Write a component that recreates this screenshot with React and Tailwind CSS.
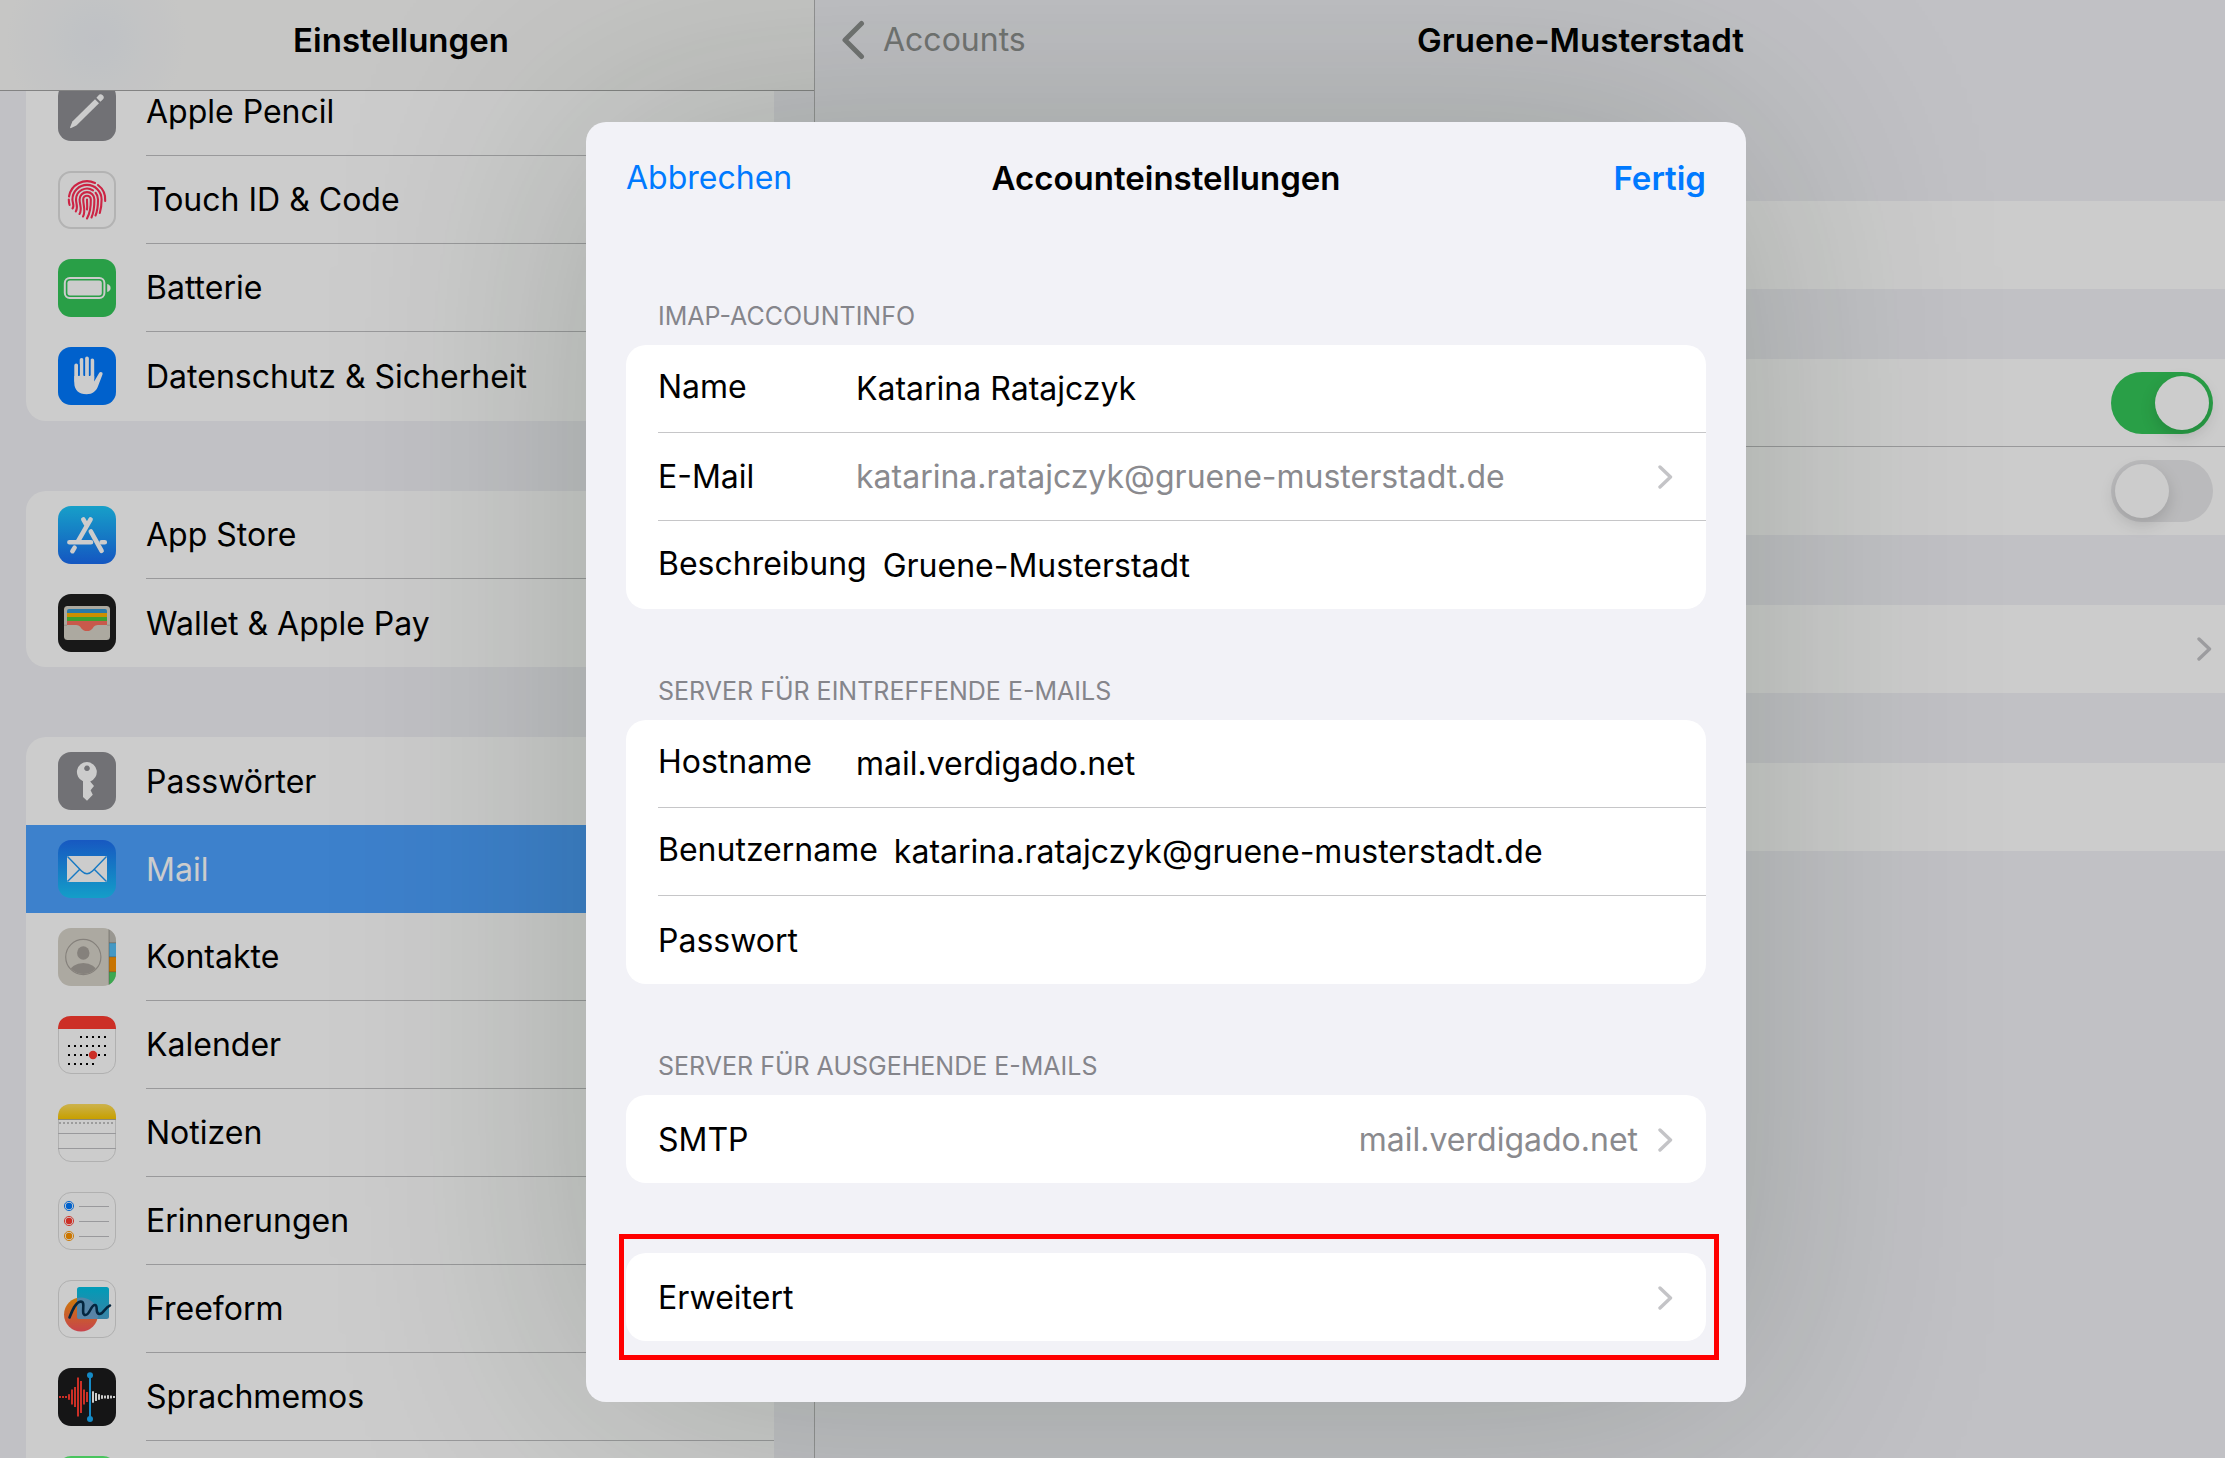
import clsx from "clsx";

function PencilIcon() {
  return (
    <svg viewBox="0 0 58 58" className="size-full">
      <rect width="58" height="58" rx="13" fill="#8e8e93" />
      <path d="M37 16.2 41 20.2 18.4 42.6 12.6 45.2 12 44.6 14.4 38.6Z" fill="#fff" />
      <path d="M38.4 14.8 40.4 12.4a3 3 0 0 1 4.4 4.2L42.4 18.8Z" fill="#fff" />
    </svg>
  );
}

function TouchIdIcon() {
  return (
    <svg viewBox="0 0 58 58" className="size-full">
      <rect x="1" y="1" width="56" height="56" rx="12" fill="#fff" stroke="#e0e0e0" strokeWidth="2" />
      <g fill="none" stroke="#ff2d55" strokeWidth="2.1" strokeLinecap="round">
        <path d="M11 25.5A18.3 18.3 0 0 1 37 12M40 14A18.3 18.3 0 0 1 47.2 30M10.8 28.5Q10.8 31.5 11.6 34" />
        <path d="M14.5 37.5C16.8 34.5 14.4 32 14.4 28.5A14.6 14.6 0 0 1 43.6 28.5C43.6 34 43 38 41.8 42" />
        <path d="M17.8 40.5C20.5 36.5 18 33 18 28.5A11 11 0 0 1 35 19.4M37.6 21.8Q40 24.5 40 28.5C40 35 39.5 40 37.5 44.5" />
        <path d="M21.5 43C24.5 38 21.6 34 21.6 28.5A7.4 7.4 0 0 1 36.4 28.5C36.4 36 36 41 33.5 46.5" />
        <path d="M25 45.5C28 40.5 25.2 34 25.2 28.5A3.8 3.8 0 0 1 32.8 28.5C33 37 32 42 29 47.5" />
        <path d="M29 28.5C29 33 29.5 36 29 38.5" />
      </g>
    </svg>
  );
}

function BatteryIcon() {
  return (
    <svg viewBox="0 0 58 58" className="size-full">
      <rect width="58" height="58" rx="13" fill="#34c759" />
      <rect x="6.8" y="19" width="39.6" height="20" rx="5" fill="none" stroke="#fff" strokeWidth="2" />
      <rect x="9.4" y="21.6" width="34.4" height="14.8" rx="2.6" fill="#fff" />
      <path d="M49.2 25c2 .6 3.4 2 3.4 4s-1.4 3.4-3.4 4Z" fill="#fff" />
    </svg>
  );
}

function HandIcon() {
  return (
    <svg viewBox="0 0 58 58" className="size-full">
      <rect width="58" height="58" rx="13" fill="#007aff" />
      <g stroke="#fff" strokeWidth="3.8" strokeLinecap="round">
        <path d="M18.2 18.4V34M23.6 12.8V32M29 11.4V32M34.3 13.4V32" />
      </g>
      <path
        d="M16.3 29H36.2V34.6L41 26.2C42 24.2 45.2 25 44.5 27.4L40.2 38.8C38.2 44.4 34.6 47.2 28.6 47.2 20.6 47.2 16.3 42.8 16.3 36Z"
        fill="#fff"
      />
      <path d="M20.9 17V28M26.3 12V28M31.7 12.5V28" stroke="#007aff" strokeWidth="1.5" />
    </svg>
  );
}

function AppStoreIcon() {
  return (
    <svg viewBox="0 0 58 58" className="size-full">
      <linearGradient id="store" x2="0" y2="1">
        <stop stopColor="#1dc8fb" />
        <stop offset="1" stopColor="#1a6cf2" />
      </linearGradient>
      <rect width="58" height="58" rx="13" fill="url(#store)" />
      <g stroke="#fff" strokeWidth="4.6" strokeLinecap="round" fill="none">
        <path d="M25.3 13.4 28.4 18.8M32.6 13.4 19.8 35.6M16.6 41.6 14.4 45.2M11.4 36.3H33M43.6 36.3H46.8" />
        <path d="M32.8 25.4 43.6 44.8" />
      </g>
    </svg>
  );
}

function WalletIcon() {
  return (
    <svg viewBox="0 0 58 58" className="size-full">
      <rect width="58" height="58" rx="13" fill="#1f1f1f" />
      <rect x="6" y="12" width="46" height="34" rx="3.5" fill="#d8d4c8" />
      <path d="M9 19V17q0-2 2-2H47q2 0 2 2V19Z" fill="#3699d2" />
      <rect x="9" y="19" width="40" height="4.2" fill="#ffb300" />
      <rect x="9" y="23" width="40" height="4.2" fill="#4ec83c" />
      <path d="M9 27H49V31H41C37 31 36.4 32 34.6 34.4 32 37.8 26 37.8 23.4 34.4 21.6 32 21 31 17 31H9Z" fill="#fa705e" />
      <path d="M6 31.2H9M49 31.2H52" stroke="#b5b1a6" />
    </svg>
  );
}

function KeyIcon() {
  return (
    <svg viewBox="0 0 58 58" className="size-full">
      <rect width="58" height="58" rx="13" fill="#8e8e93" />
      <path
        fillRule="evenodd"
        d="M29 10a10 10 0 0 1 3.2 19.4L36 34 32.6 38.2 34.8 42.8 29 48.8 25 45V29.2A10 10 0 0 1 29 10Zm0 3.5a2.8 2.8 0 1 0 .01 0Z"
        fill="#fff"
      />
    </svg>
  );
}

function MailIcon() {
  return (
    <svg viewBox="0 0 58 58" className="size-full">
      <linearGradient id="mail" x2="0" y2="1">
        <stop stopColor="#1d6ff2" />
        <stop offset="1" stopColor="#19c6fb" />
      </linearGradient>
      <rect width="58" height="58" rx="13" fill="url(#mail)" />
      <rect x="9" y="16" width="40" height="26" rx="1" fill="#fff" />
      <path
        d="M9.5 16.5 23.5 31C27 34.6 31 34.6 34.5 31L48.5 16.5M9.5 41.5 21.8 29.2M48.5 41.5 36.2 29.2"
        fill="none"
        stroke="#1c98f6"
        strokeWidth="1.4"
      />
    </svg>
  );
}

function ContactsIcon() {
  return (
    <svg viewBox="0 0 58 58" className="size-full">
      <clipPath id="contacts">
        <rect width="58" height="58" rx="13" />
      </clipPath>
      <clipPath id="avatar">
        <circle cx="25.3" cy="29" r="17" />
      </clipPath>
      <g clipPath="url(#contacts)">
        <rect width="58" height="58" fill="#d8d4ca" />
        <rect x="51" width="7" height="15" fill="#c0bdb6" />
        <rect x="51" y="15" width="7" height="14" fill="#55bff5" />
        <rect x="51" y="29" width="7" height="15" fill="#fa9100" />
        <rect x="51" y="44" width="7" height="14" fill="#4bd264" />
        <path d="M51 14.8H58M51 28.8H58M51 43.8H58M51 0V58" stroke="#6b6b60" strokeOpacity=".5" />
        <g fill="#a7a29b">
          <ellipse cx="25.3" cy="25" rx="6.2" ry="6.8" />
          <ellipse cx="25.3" cy="44" rx="13.5" ry="9" clipPath="url(#avatar)" />
        </g>
        <circle cx="25.3" cy="29" r="17.6" fill="none" stroke="#a7a29b" strokeWidth="1.2" />
      </g>
    </svg>
  );
}

const dotColumns = [11, 17, 23, 29, 35, 41, 47];

function CalendarIcon() {
  return (
    <svg viewBox="0 0 58 58" className="size-full">
      <rect x=".5" y=".5" width="57" height="57" rx="12.5" fill="#fff" stroke="#dcdcdc" />
      <path d="M0 13C0 5 5 0 13 0H45C53 0 58 5 58 13Z" fill="#ff3b30" />
      {dotColumns.map((x, i) => (
        <g key={x}>
          {i > 1 && <rect x={x - 1} y="20" width="2" height="2" />}
          <rect x={x - 1} y="29" width="2" height="2" />
          <rect x={x - 1} y="38" width="2" height="2" />
          {i < 5 && <rect x={x - 1} y="47" width="2" height="2" />}
        </g>
      ))}
      <circle cx="35" cy="39" r="4.2" fill="#ff3b30" />
    </svg>
  );
}

function NotesIcon() {
  return (
    <svg viewBox="0 0 58 58" className="size-full">
      <linearGradient id="notes" x2="0" y2="1">
        <stop stopColor="#ffdf60" />
        <stop offset="1" stopColor="#fac800" />
      </linearGradient>
      <rect x=".5" y=".5" width="57" height="57" rx="12.5" fill="#fff" stroke="#dcdcdc" />
      <path d="M0 15V13C0 5 5 0 13 0H45C53 0 58 5 58 13V15Z" fill="url(#notes)" />
      <path d="M0 15.5H58" stroke="#b0a98f" />
      <path d="M1 19H57" stroke="#c4c4c4" strokeWidth="2" strokeDasharray="2 2" />
      <path d="M0 29.5H58M0 44.5H58" stroke="#c0c0c4" />
    </svg>
  );
}

function RemindersIcon() {
  const rows = [
    { y: 14, color: "#007aff" },
    { y: 29, color: "#ff3b30" },
    { y: 44, color: "#ff9500" },
  ];
  return (
    <svg viewBox="0 0 58 58" className="size-full">
      <rect x=".5" y=".5" width="57" height="57" rx="12.5" fill="#fff" stroke="#dcdcdc" />
      {rows.map(({ y, color }) => (
        <g key={y}>
          <circle cx="11" cy={y} r="4.6" fill="none" stroke={color} strokeWidth=".9" />
          <circle cx="11" cy={y} r="3.2" fill={color} />
          <path d={`M21 ${y + 0.5}H51`} stroke="#c0c0c4" />
        </g>
      ))}
    </svg>
  );
}

function FreeformIcon() {
  return (
    <svg viewBox="0 0 58 58" className="size-full">
      <linearGradient id="ball" x2="0" y2="1">
        <stop stopColor="#ff9a0a" />
        <stop offset="1" stopColor="#fa5560" />
      </linearGradient>
      <linearGradient id="note" x2="0" y2="1">
        <stop stopColor="#00c3e6" />
        <stop offset="1" stopColor="#4aa3cf" />
      </linearGradient>
      <rect x=".5" y=".5" width="57" height="57" rx="12.5" fill="#fff" stroke="#dcdcdc" />
      <circle cx="23" cy="34.5" r="17" fill="url(#ball)" />
      <rect x="19" y="7" width="32" height="32" rx="2.5" fill="url(#note)" />
      <path d="M19 18A17 17 0 0 1 39.4 39H21.5Q19 39 19 36.5Z" fill="#7aa5cf" fillOpacity=".8" />
      <path
        d="M11.5 37.5C14 31 17.5 22 22.8 21.5 28.5 21.5 22 35 27.5 35 32 35 32.5 25 37 25 40.5 25 36.5 34 41.5 34 46 34 46.5 27.5 52 25.5"
        fill="none"
        stroke="#06304f"
        strokeWidth="2.6"
        strokeLinecap="round"
      />
    </svg>
  );
}

const redBars = [1, 1, 1, 2.8, 7.5, 10, 19.5, 16, 7.5, 5];
const whiteBars = [5.7, 4, 2.8, 1.8, 1.4, 1.8, 1.4, 1];

function VoiceMemosIcon() {
  return (
    <svg viewBox="0 0 58 58" className="size-full">
      <rect width="58" height="58" rx="13" fill="#1b1b1c" />
      {redBars.map((h, i) => (
        <rect key={i} x={1 + i * 3} y={29 - h} width="2" height={h * 2} fill="#ff3b30" />
      ))}
      {whiteBars.map((h, i) => (
        <rect key={i} x={34 + i * 3} y={29 - h} width="2" height={h * 2} fill="#fff" />
      ))}
      <path d="M32 7V51" stroke="#1badf8" strokeWidth="2" />
      <circle cx="32" cy="7.3" r="3" fill="#1badf8" />
      <circle cx="32" cy="51" r="3" fill="#1badf8" />
    </svg>
  );
}

function GreenIcon() {
  return <div className="size-full rounded-[13px] bg-[#5bf675]" />;
}

function Chevron() {
  return (
    <svg viewBox="0 0 16 26" className="h-[26px] w-4 shrink-0 text-[#c4c4c7]" fill="none" stroke="currentColor">
      <path d="M2 3 12.5 13 2 23" strokeWidth="3.4" strokeLinecap="round" strokeLinejoin="round" />
    </svg>
  );
}

const menuGroups = [
  [
    { label: "Apple Pencil", icon: PencilIcon },
    { label: "Touch ID & Code", icon: TouchIdIcon },
    { label: "Batterie", icon: BatteryIcon },
    { label: "Datenschutz & Sicherheit", icon: HandIcon },
  ],
  [
    { label: "App Store", icon: AppStoreIcon },
    { label: "Wallet & Apple Pay", icon: WalletIcon },
  ],
  [
    { label: "Passwörter", icon: KeyIcon },
    { label: "Mail", icon: MailIcon, active: true },
    { label: "Kontakte", icon: ContactsIcon },
    { label: "Kalender", icon: CalendarIcon },
    { label: "Notizen", icon: NotesIcon },
    { label: "Erinnerungen", icon: RemindersIcon },
    { label: "Freeform", icon: FreeformIcon },
    { label: "Sprachmemos", icon: VoiceMemosIcon },
    { label: "", icon: GreenIcon },
  ],
];

function MenuGroup({ items }) {
  return (
    <ul className="overflow-hidden rounded-[20px] bg-white first:pb-px">
      {items.map(({ label, icon: Icon, active }, i) => {
        const noLine = active || items[i + 1]?.active || i === items.length - 1;
        return (
          <li key={label}>
            <a href="#" className={clsx("flex h-[88px] items-center gap-[30px] pl-8", active && "bg-[#4da2ff] text-white")}>
              <span className="size-[58px] shrink-0">
                <Icon />
              </span>
              <span className={clsx("flex h-full flex-1 items-center pt-px", !noLine && "border-b border-[#c0c0c2]")}>
                {label}
              </span>
            </a>
          </li>
        );
      })}
    </ul>
  );
}

function Sidebar() {
  return (
    <aside className="flex w-[815px] shrink-0 flex-col border-r border-[#b8b8ba]">
      <header className="flex h-[91px] shrink-0 items-center justify-center border-b border-[#a4a4a4] bg-[#f8f8f7] bg-[radial-gradient(circle_at_96px_40px,#eff2f7,#f8f8f7_90px)] pr-3 pb-[10px]">
        <h1 className="text-[33px] font-semibold">Einstellungen</h1>
      </header>
      <nav className="min-h-0 flex-1 overflow-hidden">
        {/* list is scrolled a little under the header */}
        <div className="-mt-[23px] flex flex-col gap-[70px] pr-10 pl-[26px]">
          {menuGroups.map((items, i) => (
            <MenuGroup key={i} items={items} />
          ))}
        </div>
      </nav>
    </aside>
  );
}

function Toggle({ label, defaultChecked }) {
  return (
    <input
      type="checkbox"
      role="switch"
      aria-label={label}
      defaultChecked={defaultChecked}
      className="h-[62px] w-[102px] shrink-0 appearance-none rounded-full bg-[#e9e9eb] p-1 before:block before:size-[54px] before:rounded-full before:bg-white before:shadow-[0_6px_16px_rgba(0,0,0,0.15)] checked:bg-[#34c759] checked:before:ml-10"
    />
  );
}

function DetailPane() {
  return (
    <main className="min-w-0 flex-1">
      <header className="grid h-[90px] grid-cols-3 items-center px-6 pb-[10px]">
        <a href="#" className="flex items-center gap-4 text-[#8f9190]">
          <svg viewBox="0 0 28 40" className="h-10 w-7" fill="none" stroke="currentColor">
            <path d="M22.5 3.5 6 20 22.5 36.5" strokeWidth="5" strokeLinecap="round" strokeLinejoin="round" />
          </svg>
          Accounts
        </a>
        <h2 className="text-center text-[33px] font-semibold">Gruene-Musterstadt</h2>
      </header>
      <div className="flex flex-col gap-[70px] px-[101px] pt-[111px]">
        <div className="h-[88px] rounded-[20px] bg-white" />
        <div className="rounded-[20px] bg-white pl-8">
          <div className="flex h-[88px] items-center justify-end border-b border-[#c0c0c2] pr-8">
            <Toggle label="Mail" defaultChecked />
          </div>
          <div className="flex h-[88px] items-center justify-end pr-8">
            <Toggle label="Notizen" />
          </div>
        </div>
        <div className="flex h-[88px] items-center justify-end rounded-[20px] bg-white pr-8">
          <Chevron />
        </div>
        <div className="h-[88px] rounded-[20px] bg-white" />
      </div>
    </main>
  );
}

function Section({ title, children }) {
  return (
    <section className="mt-[66px]">
      <h3 className="mb-[13px] pl-8 text-[25px] leading-8 text-[#85858b]">{title}</h3>
      <div className="rounded-[20px] bg-white pl-8">{children}</div>
    </section>
  );
}

const rowClass =
  "flex h-[88px] w-full items-center gap-4 border-b border-[#c6c6c8] pt-px pr-8 text-left last:border-b-0";

function Field({ id, label, value, type = "text" }) {
  return (
    <div className={rowClass}>
      <label htmlFor={id} className={clsx("min-w-[182px] shrink-0", value && "pb-1")}>
        {label}
      </label>
      <input id={id} type={type} defaultValue={value} className="min-w-0 flex-1 bg-transparent outline-none" />
    </div>
  );
}

function AccountDialog() {
  return (
    <div
      role="dialog"
      aria-labelledby="dialog-title"
      className="w-[1160px] rounded-[20px] bg-[#f2f2f7] px-10 pb-[42px] shadow-[0_0_280px_rgba(20,40,20,0.22)]"
    >
      <header className="flex h-28 items-center justify-between">
        <button className="flex-1 text-left text-[#007aff]">Abbrechen</button>
        <h2 id="dialog-title" className="text-[33px] font-semibold">
          Accounteinstellungen
        </h2>
        <button className="flex-1 text-right text-[33px] font-semibold text-[#007aff]">Fertig</button>
      </header>
      <Section title="IMAP-ACCOUNTINFO">
        <Field id="name" label="Name" value="Katarina Ratajczyk" />
        <button className={rowClass}>
          <span className="min-w-[182px]">E-Mail</span>
          <span className="flex-1 text-[#8a8a8e]">katarina.ratajczyk@gruene-musterstadt.de</span>
          <Chevron />
        </button>
        <Field id="description" label="Beschreibung" value="Gruene-Musterstadt" />
      </Section>
      <Section title="SERVER FÜR EINTREFFENDE E-MAILS">
        <Field id="host" label="Hostname" value="mail.verdigado.net" />
        <Field id="user" label="Benutzername" value="katarina.ratajczyk@gruene-musterstadt.de" />
        <Field id="password" label="Passwort" type="password" />
      </Section>
      <Section title="SERVER FÜR AUSGEHENDE E-MAILS">
        <button className={rowClass}>
          SMTP
          <span className="flex-1 pr-1 text-right text-[#8a8a8e]">mail.verdigado.net</span>
          <Chevron />
        </button>
      </Section>
      <div className="-mr-[13px] -ml-[7px] mt-[51px] border-[5px] border-[#ff0000] py-[14px] pr-2 pl-[2px]">
        <button className="flex h-[88px] w-full items-center justify-between rounded-[20px] bg-white px-8 pt-px">
          Erweitert
          <Chevron />
        </button>
      </div>
    </div>
  );
}

export default function App() {
  return (
    <div className="h-screen overflow-hidden bg-[#f2f2f7] font-['Inter',sans-serif] text-[32px] leading-10 text-black">
      <div className="relative flex h-full w-[calc(100%+121px)]">
        <Sidebar />
        <DetailPane />
        {/* dimmed backdrop */}
        <div className="absolute inset-0 flex items-start justify-center bg-black/20 pt-[122px] pr-[14px]">
          <AccountDialog />
        </div>
      </div>
    </div>
  );
}
